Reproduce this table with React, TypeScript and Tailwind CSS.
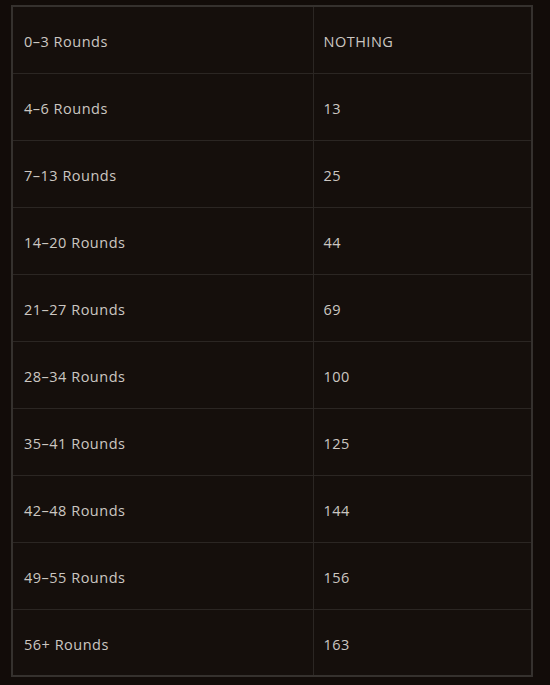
const rows = [
  { range: "0–3 Rounds", reward: "NOTHING" },
  { range: "4–6 Rounds", reward: "13" },
  { range: "7–13 Rounds", reward: "25" },
  { range: "14–20 Rounds", reward: "44" },
  { range: "21–27 Rounds", reward: "69" },
  { range: "28–34 Rounds", reward: "100" },
  { range: "35–41 Rounds", reward: "125" },
  { range: "42–48 Rounds", reward: "144" },
  { range: "49–55 Rounds", reward: "156" },
  { range: "56+ Rounds", reward: "163" },
];

export default function App() {
  return (
    <div className="w-[550px] h-[685px] bg-[#120c09] pl-[11px] pt-[5px] font-['Open_Sans',sans-serif]">
      <table className="w-[522px] border-collapse border-2 border-[#35312e] bg-[#150f0c] table-fixed">
        <tbody>
          {rows.map((row, i) => (
            <tr key={i} className="h-[67px] border-b border-[#2b2623]">
              <td className="w-[301px] pl-[11px] border-r border-[#2b2623] text-[14.5px] text-[#ccc7c2] tracking-[0.5px] pt-[5px]">
                {row.range}
              </td>
              <td className="pl-[10px] text-[14.5px] text-[#ccc7c2] tracking-[0.5px] pt-[5px]">
                {row.reward}
              </td>
            </tr>
          ))}
        </tbody>
      </table>
    </div>
  );
}
